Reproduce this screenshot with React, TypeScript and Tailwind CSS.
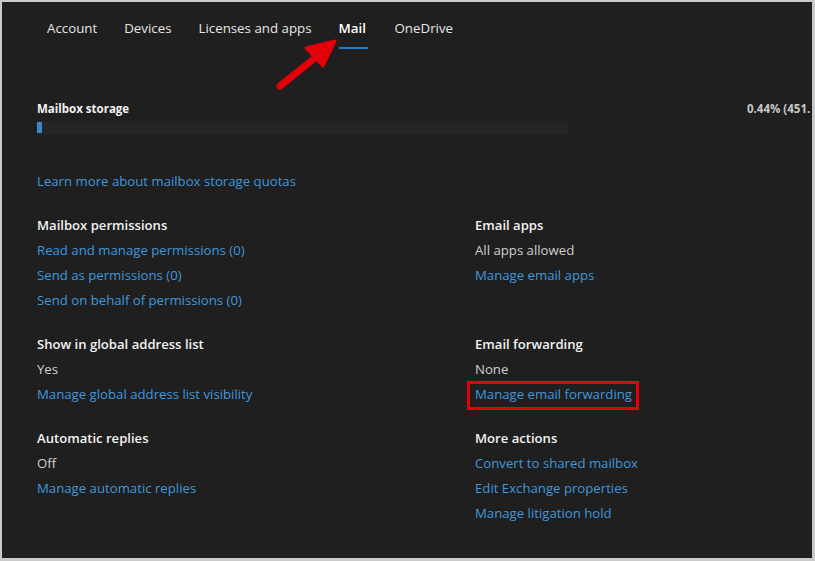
const font = { fontFamily: '"Segoe UI", "Open Sans", "Noto Sans", sans-serif' };

const tabs = ['Account', 'Devices', 'Licenses and apps', 'Mail', 'OneDrive'];

type Section = {
  title: string;
  value?: string;
  links: string[];
  boxed?: string;
};

const left: Section[] = [
  {
    title: 'Mailbox permissions',
    links: ['Read and manage permissions (0)', 'Send as permissions (0)', 'Send on behalf of permissions (0)'],
  },
  { title: 'Show in global address list', value: 'Yes', links: ['Manage global address list visibility'] },
  { title: 'Automatic replies', value: 'Off', links: ['Manage automatic replies'] },
];

const right: Section[] = [
  { title: 'Email apps', value: 'All apps allowed', links: ['Manage email apps'] },
  { title: 'Email forwarding', value: 'None', links: ['Manage email forwarding'], boxed: 'Manage email forwarding' },
  {
    title: 'More actions',
    links: ['Convert to shared mailbox', 'Edit Exchange properties', 'Manage litigation hold'],
  },
];

function Block({ s }: { s: Section }) {
  return (
    <div className="flex flex-col">
      <div className="h-[25px] leading-[25px] text-[13.1px] font-semibold text-[#f2f2f2]">{s.title}</div>
      {s.value && <div className="h-[25px] leading-[25px] text-[13.2px] text-[#cfcfcf]">{s.value}</div>}
      {s.links.map((l) => (
        <div key={l} className="h-[25px] leading-[25px] text-[13.2px]">
          <span className="relative inline-block text-[#3f97dc]">
            {l}
            {s.boxed === l && (
              <span className="absolute -left-[8px] -right-[7px] top-[-1px] bottom-[-3px] border-[3px] border-[#e3000b]" />
            )}
          </span>
        </div>
      ))}
    </div>
  );
}

export default function App() {
  return (
    <div
      className="relative w-[815px] h-[561px] overflow-hidden bg-[#1f1f1f] border-[#c9c9c9] border-l-2 border-t-2 border-r-[3px] border-b-[3px]"
      style={font}
    >
      {/* Tabs */}
      <nav className="flex gap-[27px] pl-[45px] pt-[16px]">
        {tabs.map((t) => (
          <div key={t} className="flex flex-col">
            <span
              className={
                t === 'Mail'
                  ? 'leading-[20px] text-[13.3px] font-semibold text-white'
                  : 'leading-[20px] text-[13.3px] text-[#e6e6e6]'
              }
            >
              {t}
            </span>
            <span className={t === 'Mail' ? 'mt-[9px] h-[2px] w-[29px] bg-[#1a7fd4]' : 'mt-[9px] h-[2px]'} />
          </div>
        ))}
      </nav>

      <div className="pl-[35px] pt-[50px]">
        {/* Mailbox storage */}
        <div className="grid grid-cols-[710px_1fr]">
          <div className="leading-[20px] text-[11.5px] font-bold text-[#f2f2f2]">Mailbox storage</div>
          <div className="leading-[20px] text-[11.5px] font-bold text-[#c8c8c8] whitespace-nowrap">0.44% (451.</div>
        </div>
        <div className="mt-[2px] w-[531px] h-[13px] bg-[#252525] flex items-center">
          <div className="w-[5px] h-[11px] bg-[#3a86c8]" />
        </div>

        <div className="mt-[35px] h-[25px] leading-[25px] text-[13.2px] text-[#3f97dc]">
          Learn more about mailbox storage quotas
        </div>

        <div className="mt-[19px] grid grid-cols-[438px_1fr] gap-y-[19px]">
          {left.map((s, i) => (
            <div key={s.title} className="contents">
              <Block s={s} />
              <Block s={right[i]} />
            </div>
          ))}
        </div>
      </div>

      {/* Annotation arrow */}
      <svg className="absolute left-0 top-0 pointer-events-none" width="815" height="561">
        <line x1="278" y1="84" x2="318" y2="52" stroke="#e3000b" strokeWidth="7" strokeLinecap="round" />
        <polygon points="333,39 304,46 321,64" fill="#e3000b" stroke="#e3000b" strokeWidth="3" strokeLinejoin="round" />
      </svg>
    </div>
  );
}
